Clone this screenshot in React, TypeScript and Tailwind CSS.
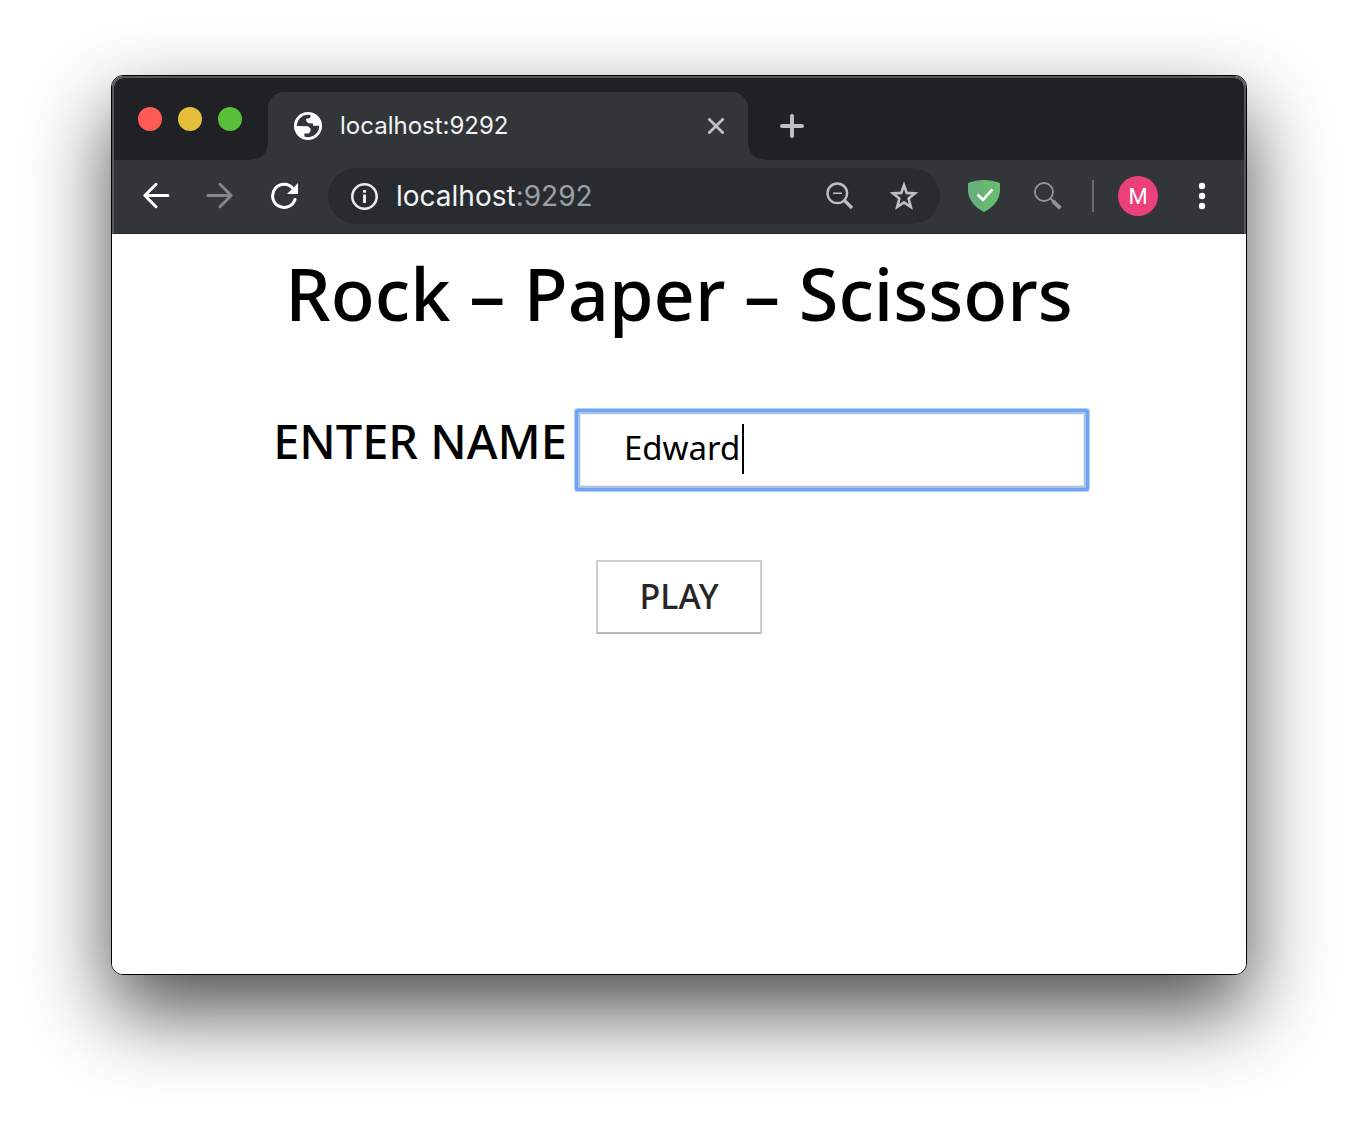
import React from 'react';

const iconButton = 'flex shrink-0 items-center justify-center';

function GlobeIcon() {
  return (
    <svg width="28" height="28" viewBox="0 0 28 28" aria-hidden="true">
      <circle cx="14" cy="14" r="14" fill="#fff" />
      <path
        d="M2.8 14A11.2 11.2 0 0 1 16.5 3.1V5.2L14.5 6.4H12.2V9.2L14.6 11.2L19 11.6V13.8H25.2A11.2 11.2 0 0 1 10.4 24.6V21.6H14.6L16.6 19V16.4L14 14.2Z"
        fill="#323639"
      />
    </svg>
  );
}

function ArrowIcon({ flip = false }: { flip?: boolean }) {
  return (
    <svg
      width="28"
      height="28"
      viewBox="0 0 28 28"
      fill="none"
      stroke={flip ? '#848688' : '#fff'}
      strokeWidth="3"
      strokeLinecap="round"
      strokeLinejoin="round"
      aria-hidden="true"
    >
      {flip ? <path d="M2 13.5H25M14 2.3L25.2 13.5L14 24.7" /> : <path d="M26 13.5H3M14 2.3L2.8 13.5L14 24.7" />}
    </svg>
  );
}

function ReloadIcon() {
  return (
    <svg width="28" height="28" viewBox="0 0 28 28" fill="none" aria-hidden="true">
      <path d="M25 17.5A11.5 11.5 0 1 1 23 6.6" stroke="#fff" strokeWidth="3" strokeLinecap="round" />
      <path d="M28 1V12H17Z" fill="#fff" />
    </svg>
  );
}

function InfoIcon() {
  return (
    <svg width="28" height="28" viewBox="0 0 28 28" fill="none" aria-hidden="true">
      <circle cx="14.5" cy="14.5" r="12.2" stroke="#e8eaed" strokeWidth="2.6" />
      <path d="M13 8H16V10.8H13ZM13 12.6H16V21H13Z" fill="#e8eaed" />
    </svg>
  );
}

function ZoomOutIcon() {
  return (
    <svg width="28" height="28" viewBox="0 0 28 28" fill="none" stroke="#bdc1c6" aria-hidden="true">
      <circle cx="11.3" cy="11.3" r="9.8" strokeWidth="2.4" />
      <path d="M7 11.3H16" strokeWidth="1.6" />
      <path d="M18.6 18.6L26 26" strokeWidth="3.4" />
    </svg>
  );
}

function StarIcon() {
  return (
    <svg width="30" height="30" viewBox="0 0 30 30" fill="none" aria-hidden="true">
      <path
        d="M15 4.2L17.7 11.9L26 12.4L19.6 17.6L21.8 26L15 21.4L8.2 26L10.4 17.6L4 12.4L12.3 11.9Z"
        stroke="#bdc1c6"
        strokeWidth="2.6"
      />
    </svg>
  );
}

function ShieldIcon() {
  return (
    <svg width="32" height="32" viewBox="0 0 32 32" fill="none" aria-hidden="true">
      <path d="M16 0C11 0 5 1 0 3V10C0 19 6 27 16 32Z" fill="#67b279" />
      <path d="M16 0C21 0 27 1 32 3V10C32 19 26 27 16 32Z" fill="#68bc71" />
      <path d="M9.5 14.5L15 19.8L24.4 9.4" stroke="#fff" strokeWidth="2.6" />
    </svg>
  );
}

function SearchIcon() {
  return (
    <svg width="28" height="28" viewBox="0 0 28 28" fill="none" stroke="#949494" aria-hidden="true">
      <circle cx="10" cy="10" r="9" strokeWidth="1.8" />
      <path d="M16.5 16.5L19.5 19.5" strokeWidth="2" />
      <path d="M18.8 18.8L26.4 26.4" strokeWidth="4" />
    </svg>
  );
}

function TitleBar() {
  return (
    <div className="flex h-[82px] items-end bg-[#202124]">
      <div className="flex gap-4 self-center pl-6">
        <button aria-label="Close window" className="size-6 rounded-full bg-[#ff5b56]" />
        <button aria-label="Minimize window" className="size-6 rounded-full bg-[#e5bf3c]" />
        <button aria-label="Zoom window" className="size-6 rounded-full bg-[#57bf38]" />
      </div>
      <div className="relative ml-[26px] flex h-[68px] w-[480px] items-center rounded-t-2xl bg-[#323639] pr-6 pl-[26px]">
        <span className="absolute bottom-0 -left-4 size-4 bg-[radial-gradient(circle_at_0_0,transparent_15px,#323639_16px)]" />
        <span className="absolute -right-4 bottom-0 size-4 bg-[radial-gradient(circle_at_100%_0,transparent_15px,#323639_16px)]" />
        <GlobeIcon />
        <span className="ml-[18px] flex-1 text-[24px] leading-8 text-[#f1f3f4]">localhost:9292</span>
        <button aria-label="Close tab" className={iconButton}>
          <svg width="16" height="16" viewBox="0 0 16 16" stroke="#bdc1c6" strokeWidth="2.8" strokeLinecap="round" aria-hidden="true">
            <path d="M1.4 1.4L14.6 14.6M14.6 1.4L1.4 14.6" />
          </svg>
        </button>
      </div>
      <button aria-label="New tab" className="ml-8 flex h-[68px] items-center">
        <svg width="24" height="24" viewBox="0 0 24 24" stroke="#bdc1c6" strokeWidth="4" strokeLinecap="round" aria-hidden="true">
          <path d="M12 2V22M2 12H22" />
        </svg>
      </button>
    </div>
  );
}

function Toolbar() {
  return (
    <div className="flex h-[74px] items-center border-b border-[#242628] bg-[#323639] pr-[38px] pb-px pl-7">
      <div className="flex gap-9">
        <button aria-label="Back" className={iconButton}>
          <ArrowIcon />
        </button>
        <button aria-label="Forward" className={iconButton}>
          <ArrowIcon flip />
        </button>
        <button aria-label="Reload" className={iconButton}>
          <ReloadIcon />
        </button>
      </div>
      <div className="ml-[30px] flex h-14 flex-1 items-center rounded-full bg-[#292c2f] pr-[21px] pl-[22px]">
        <button aria-label="Site information" className={iconButton}>
          <InfoIcon />
        </button>
        <div className="ml-[18px] flex-1 text-[28px] leading-9 text-[#f1f3f4]">
          localhost<span className="text-[#9aa0a6]">:9292</span>
        </div>
        <button aria-label="Zoom out" className={iconButton}>
          <ZoomOutIcon />
        </button>
        <button aria-label="Bookmark" className="ml-[35px] flex shrink-0">
          <StarIcon />
        </button>
      </div>
      <div className="ml-7 flex items-center">
        <button aria-label="Ad blocker" className={iconButton}>
          <ShieldIcon />
        </button>
        <button aria-label="Search" className="ml-[34px] flex shrink-0">
          <SearchIcon />
        </button>
        <span className="ml-[30px] h-8 w-[2px] bg-[#6b6e71]" />
        <button
          aria-label="Profile"
          className="ml-6 flex size-10 items-center justify-center rounded-full bg-[#ec407a] font-[Roboto,sans-serif] text-[22px] text-white"
        >
          M
        </button>
        <button aria-label="Menu" className="ml-10 flex shrink-0">
          <svg width="8" height="28" viewBox="0 0 8 28" fill="#fff" aria-hidden="true">
            <circle cx="4" cy="4" r="3.2" />
            <circle cx="4" cy="14" r="3.2" />
            <circle cx="4" cy="24" r="3.2" />
          </svg>
        </button>
      </div>
    </div>
  );
}

function GamePage() {
  return (
    <main className="flex flex-1 flex-col items-center bg-white font-['Noto_Sans','Open_Sans',sans-serif] text-black">
      <h1 className="mt-2 text-[72px] leading-[102px] font-medium">Rock – Paper – Scissors</h1>
      <form className="mt-[69px] flex flex-col items-center" onSubmit={(event) => event.preventDefault()}>
        <div className="flex items-start gap-3">
          <label htmlFor="player-name" className="text-[47px] leading-14 font-medium">
            ENTER NAME
          </label>
          <div className="relative">
            <input
              id="player-name"
              type="text"
              defaultValue="Edward"
              className="block h-[74px] w-[506px] rounded-[1px] border border-[#b9bdc4] px-11 pb-1.5 text-[33px] caret-transparent shadow-[inset_0_0_0_1px_#ececec,0_0_0_1px_#a3c5fa,0_0_0_4px_#6ea4f7,0_0_0_5px_#b3d0fa] outline-none"
            />
            <span className="absolute top-[11px] left-[163px] h-[50px] w-[2px] bg-black" />
          </div>
        </div>
        <button
          type="submit"
          className="mt-[73px] h-[74px] w-[166px] border-2 border-[#cecece] border-b-[#b8b8b8] bg-white pb-0.5 text-[34px] font-medium text-[#262626]"
        >
          PLAY
        </button>
      </form>
    </main>
  );
}

export default function App() {
  return (
    <div className="flex min-h-screen flex-col bg-white px-[111px] pt-[75px] pb-[147px] font-[Inter,Roboto,sans-serif]">
      <div className="flex flex-1 flex-col overflow-hidden rounded-xl border border-black bg-white shadow-[0_36px_82px_rgba(0,0,0,0.7)]">
        <header className="overflow-hidden rounded-t-[11px] border-x-2 border-t-2 border-[#55585a]">
          <TitleBar />
          <Toolbar />
        </header>
        <GamePage />
      </div>
    </div>
  );
}
